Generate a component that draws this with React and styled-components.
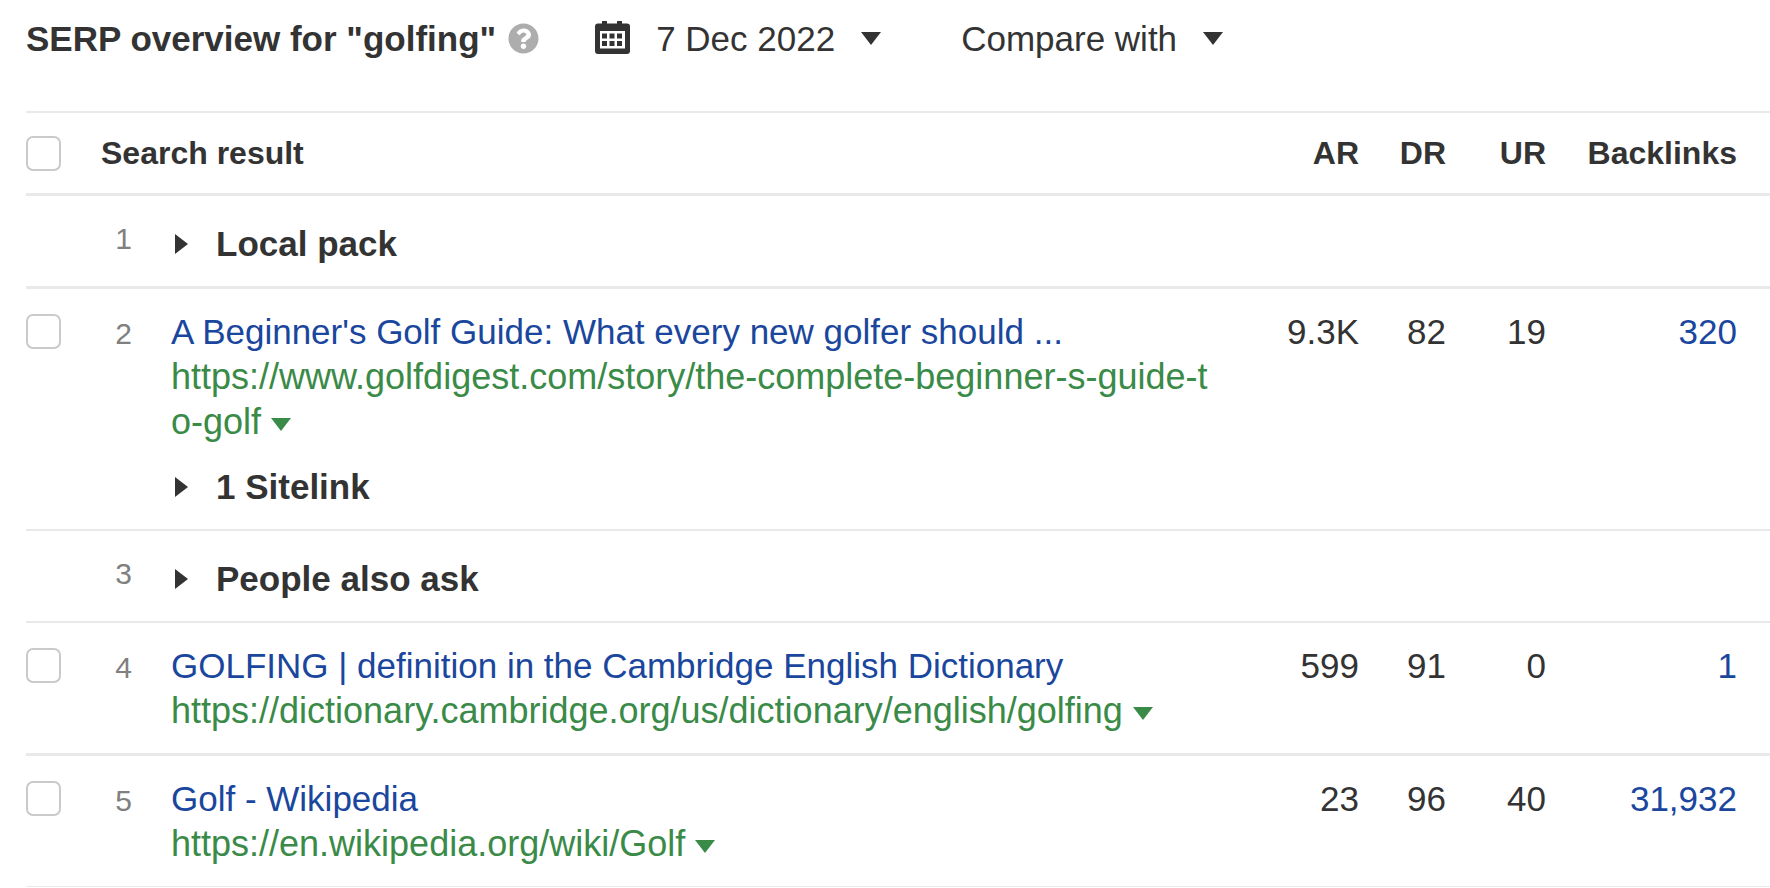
import React from "react";
import styled, { createGlobalStyle } from "styled-components";
import { FaQuestionCircle } from "react-icons/fa";

const ink = "#333333";
const blue = "#1a479d";
const green = "#3a8a48";
const line = "#e9e9ec";

const GlobalStyle = createGlobalStyle`
  *, *::before, *::after { box-sizing: border-box; }
  body {
    margin: 0;
    background: #fff;
    color: ${ink};
    font-family: "Helvetica Neue", "Liberation Sans", Arial, sans-serif;
    font-size: 35px;
    line-height: 45px;
  }
`;

const Page = styled.main`
  padding-left: 26px;
`;

const Toolbar = styled.header`
  display: flex;
  align-items: center;
  padding: 16px 0 50px;
`;

const Title = styled.h1`
  margin: 0;
  font-size: 35px;
  font-weight: 700;
  line-height: 45px;
  white-space: nowrap;
`;

const PlainButton = styled.button`
  display: inline-flex;
  align-items: center;
  padding: 0;
  border: 0;
  background: none;
  color: inherit;
  font: inherit;
  white-space: nowrap;
  cursor: pointer;
`;

const HelpButton = styled(PlainButton)`
  margin-left: 12px;
  color: #adadad;
`;

const MenuButton = styled(PlainButton)`
  gap: 26px;
  margin-left: ${({ $space }) => $space}px;
`;

const ToggleButton = styled(PlainButton)`
  display: flex;
  gap: 28px;
  padding-left: 4px;
  font-weight: 700;
`;

const UrlMenuButton = styled(PlainButton)`
  margin-left: 10px;
  color: ${green};
  vertical-align: middle;
`;

const Table = styled.table`
  width: 100%;
  table-layout: fixed;
  border-collapse: separate;
  border-spacing: 0;
`;

const Col = styled.col`
  width: ${({ $width }) => ($width ? `${$width}px` : "auto")};
`;

const HeadCell = styled.th`
  height: 85px;
  padding: 0 ${({ $last }) => ($last ? 33 : 0)}px 0 0;
  border-top: 2px solid ${line};
  border-bottom: 3px solid ${line};
  font-size: 32px;
  font-weight: 700;
  text-align: ${({ $numeric }) => ($numeric ? "right" : "left")};
  vertical-align: middle;
`;

const Row = styled.tr`
  & > td {
    border-bottom: ${({ $rule }) => $rule}px solid ${line};
  }
`;

const Cell = styled.td`
  padding: 20px 0;
  vertical-align: top;
`;

const CheckCell = styled(Cell)`
  padding-top: 25px;
`;

const RankCell = styled(Cell)`
  padding-right: 39px;
  color: #808080;
  font-size: 30px;
  text-align: right;
  vertical-align: ${({ $feature }) => ($feature ? "top" : "baseline")};
`;

const ResultCell = styled(Cell)`
  padding-right: 28px;
  vertical-align: baseline;
`;

const FeatureCell = styled(Cell)`
  padding-top: 25px;
`;

const NumberCell = styled(Cell)`
  padding-right: ${({ $last }) => ($last ? 33 : 0)}px;
  text-align: right;
  vertical-align: baseline;
`;

const Checkbox = styled.input.attrs({ type: "checkbox" })`
  appearance: none;
  display: block;
  width: 35px;
  height: 35px;
  margin: 0;
  border: 2px solid #cacaca;
  border-radius: 7px;
  background: #fff;

  &:checked {
    background: ${blue};
  }
`;

const Link = styled.a`
  color: ${blue};
  text-decoration: none;
`;

const UrlLine = styled.div`
  color: ${green};
  font-size: 36px;
  word-break: break-all;
`;

const UrlLink = styled(Link)`
  color: ${green};
`;

const Sitelinks = styled.div`
  margin-top: 20px;
`;

const DownCaret = () => (
  <svg width="20" height="13" viewBox="0 0 20 13" fill="currentColor" aria-hidden="true">
    <path d="M0 0h20L10 13z" />
  </svg>
);

const RightCaret = () => (
  <svg width="13" height="20" viewBox="0 0 13 20" fill="currentColor" aria-hidden="true">
    <path d="M0 0v20l13-10z" />
  </svg>
);

const CalendarIcon = () => (
  <svg width="35" height="35" viewBox="0 0 35 35" fill="currentColor" aria-hidden="true">
    <path
      fillRule="evenodd"
      d="M3 2.5h4V0h5v2.500h10V0h5v2.500h5a3 3 0 0 1 3 3V30a3 3 0 0 1-3 3H3a3 3 0 0 1-3-3V5.500a3 3 0 0 1 3-3zM5 10v17.500h25V10z"
    />
    <path d="M7 12.500h5v5H7zM14.500 12.500h5v5h-5zM22 12.500h5v5h-5zM7 20h5v5H7zM14.500 20h5v5h-5zM22 20h5v5h-5z" />
  </svg>
);

const Toggle = ({ children }) => (
  <ToggleButton type="button" aria-expanded="false">
    <RightCaret />
    {children}
  </ToggleButton>
);

const rows = [
  { rank: 1, feature: "Local pack", rule: 3 },
  {
    rank: 2,
    title: "A Beginner's Golf Guide: What every new golfer should ...",
    url: "https://www.golfdigest.com/story/the-complete-beginner-s-guide-to-golf",
    sitelinks: "1 Sitelink",
    ar: "9.3K",
    dr: "82",
    ur: "19",
    backlinks: "320",
    rule: 2,
  },
  { rank: 3, feature: "People also ask", rule: 2 },
  {
    rank: 4,
    title: "GOLFING | definition in the Cambridge English Dictionary",
    url: "https://dictionary.cambridge.org/us/dictionary/english/golfing",
    ar: "599",
    dr: "91",
    ur: "0",
    backlinks: "1",
    rule: 3,
  },
  {
    rank: 5,
    title: "Golf - Wikipedia",
    url: "https://en.wikipedia.org/wiki/Golf",
    ar: "23",
    dr: "96",
    ur: "40",
    backlinks: "31,932",
    rule: 1,
  },
];

const FeatureRow = ({ row }) => (
  <Row $rule={row.rule}>
    <Cell />
    <RankCell $feature>{row.rank}</RankCell>
    <FeatureCell colSpan={5}>
      <Toggle>{row.feature}</Toggle>
    </FeatureCell>
  </Row>
);

const ResultRow = ({ row }) => (
  <Row $rule={row.rule}>
    <CheckCell>
      <Checkbox aria-label={`Select ${row.title}`} />
    </CheckCell>
    <RankCell>{row.rank}</RankCell>
    <ResultCell>
      <Link href="#result">{row.title}</Link>
      <UrlLine>
        <UrlLink href="#result">{row.url}</UrlLink>
        <UrlMenuButton type="button" aria-label="URL options">
          <DownCaret />
        </UrlMenuButton>
      </UrlLine>
      {row.sitelinks && (
        <Sitelinks>
          <Toggle>{row.sitelinks}</Toggle>
        </Sitelinks>
      )}
    </ResultCell>
    <NumberCell>{row.ar}</NumberCell>
    <NumberCell>{row.dr}</NumberCell>
    <NumberCell>{row.ur}</NumberCell>
    <NumberCell $last>
      <Link href="#backlinks">{row.backlinks}</Link>
    </NumberCell>
  </Row>
);

export default function App() {
  return (
    <Page>
      <GlobalStyle />
      <Toolbar>
        <Title>SERP overview for "golfing"</Title>
        <HelpButton type="button" aria-label="Help">
          <FaQuestionCircle size={31} />
        </HelpButton>
        <MenuButton type="button" $space={56}>
          <CalendarIcon />
          7 Dec 2022
          <DownCaret />
        </MenuButton>
        <MenuButton type="button" $space={80}>
          Compare with
          <DownCaret />
        </MenuButton>
      </Toolbar>
      <Table>
        <colgroup>
          <Col $width={75} />
          <Col $width={70} />
          <Col />
          <Col $width={118} />
          <Col $width={87} />
          <Col $width={100} />
          <Col $width={224} />
        </colgroup>
        <thead>
          <tr>
            <HeadCell>
              <Checkbox aria-label="Select all results" />
            </HeadCell>
            <HeadCell colSpan={2}>Search result</HeadCell>
            <HeadCell $numeric>AR</HeadCell>
            <HeadCell $numeric>DR</HeadCell>
            <HeadCell $numeric>UR</HeadCell>
            <HeadCell $numeric $last>Backlinks</HeadCell>
          </tr>
        </thead>
        <tbody>
          {rows.map((row) =>
            row.feature ? (
              <FeatureRow key={row.rank} row={row} />
            ) : (
              <ResultRow key={row.rank} row={row} />
            )
          )}
        </tbody>
      </Table>
    </Page>
  );
}
